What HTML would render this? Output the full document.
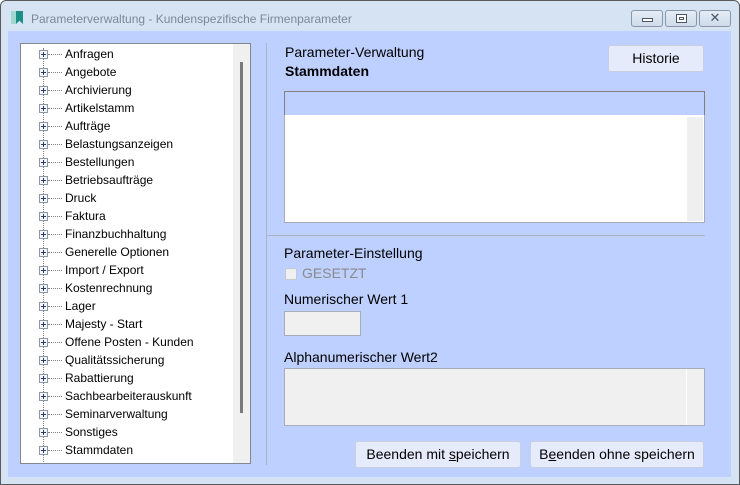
<!DOCTYPE html>
<html><head><meta charset="utf-8"><style>
*{margin:0;padding:0;box-sizing:border-box}
body{width:740px;height:485px;background:#fff;font-family:"Liberation Sans",Arial,sans-serif;position:relative;overflow:hidden}
.abs{position:absolute}
#win{left:0;top:0;width:740px;height:485px;border:1px solid #5a5a5a;border-radius:6px 6px 0 0;background:#d6e3f2}
#client{left:8px;top:31px;width:723px;height:446px;background:#bed0ff}
.title{left:31px;top:12px;font-size:12px;color:#7a8898}
.tb{top:10px;height:17px;border:1px solid #8a97a8;border-radius:3px;background:linear-gradient(#e4ecf6,#cfdbea)}
#tree{left:20px;top:43px;width:231px;height:421px;background:#fff;border:1px solid #828790}
#sb{left:233px;top:44px;width:17px;height:419px;background:#f0f0f0}
#thumb{left:240px;top:62px;width:3px;height:351px;background:#7a7a7a}
.item{position:absolute;left:65px;font-size:12px;color:#000;line-height:14px}
.plus{position:absolute;left:39px;width:9px;height:9px;border:1px solid #8c97a8;background:#f4f6fa}
.plus:before{content:"";position:absolute;left:1px;top:3px;width:5px;height:1px;background:#2a3a6a}
.plus:after{content:"";position:absolute;left:3px;top:1px;width:1px;height:5px;background:#2a3a6a}
.dot{position:absolute;left:48px;width:14px;border-top:1px dotted #808080}
.vline{left:43px;top:48px;height:416px;border-left:1px dotted #808080}
.lbl{font-size:14px;color:#000}
.btn{background:#e6ebfb;border:1px solid #c8cfdf;border-radius:3px;font-size:14px;text-align:center;color:#000}
</style></head><body>
<div id="win" class="abs"></div>
<div class="abs" style="left:11px;top:11px;width:5px;height:13px;background:#9fd8d0"></div>
<div class="abs" style="left:16px;top:11px;width:7px;height:13px;background:#1b8f86;clip-path:polygon(0 0,100% 0,100% 100%,50% 75%,0 100%)"></div>
<div class="abs title">Parameterverwaltung - Kundenspezifische Firmenparameter</div>
<div class="abs tb" style="left:631px;width:32px"><div class="abs" style="left:10px;top:7px;width:11px;height:4px;border:1px solid #4a5666;background:#fff"></div></div>
<div class="abs tb" style="left:665px;width:32px"><div class="abs" style="left:10px;top:3px;width:11px;height:9px;border:1px solid #4a5666;background:#fff"><div class="abs" style="left:2px;top:2px;width:5px;height:3px;border:1px solid #4a5666"></div></div></div>
<div class="abs tb" style="left:699px;width:32px;text-align:center;font-size:13px;line-height:14px;color:#4a5666">✕</div>
<div id="client" class="abs"></div>
<div id="tree" class="abs"></div>
<div class="abs vline"></div>
<div id="sb" class="abs"></div>
<div id="thumb" class="abs"></div>
<div id="items"></div>
<script>
var n=["Anfragen","Angebote","Archivierung","Artikelstamm","Aufträge","Belastungsanzeigen","Bestellungen","Betriebsaufträge","Druck","Faktura","Finanzbuchhaltung","Generelle Optionen","Import / Export","Kostenrechnung","Lager","Majesty - Start","Offene Posten - Kunden","Qualitätssicherung","Rabattierung","Sachbearbeiterauskunft","Seminarverwaltung","Sonstiges","Stammdaten"];
var h="";n.forEach(function(t,i){var y=54+i*18;h+='<div class="plus" style="top:'+(y-4)+'px"></div><div class="dot" style="top:'+y+'px"></div><div class="item" style="top:'+(y-7)+'px">'+t+'</div>';});
document.getElementById("items").innerHTML=h;
</script>
<div class="abs" style="left:266px;top:43px;width:1px;height:422px;background:#a8b4c8"></div>
<div class="abs lbl" style="left:285px;top:44px">Parameter-Verwaltung</div>
<div class="abs lbl" style="left:285px;top:63px;font-weight:bold">Stammdaten</div>
<div class="abs btn" style="left:608px;top:45px;width:96px;height:27px;line-height:25px">Historie</div>
<div class="abs" style="left:284px;top:91px;width:421px;height:25px;border:1px solid #808080;background:#bed0ff"></div>
<div class="abs" style="left:284px;top:115px;width:421px;height:108px;border:1px solid #a8acb8;border-top:none;background:#fff"></div>
<div class="abs" style="left:687px;top:117px;width:16px;height:104px;background:#efefef"></div>
<div class="abs" style="left:266px;top:235px;width:439px;height:1px;background:#a8b4c8"></div>
<div class="abs lbl" style="left:284px;top:245px">Parameter-Einstellung</div>
<div class="abs" style="left:285px;top:268px;width:12px;height:12px;border:1px solid #c4c8d0;border-radius:2px;background:#f0f0f0"></div>
<div class="abs lbl" style="left:302px;top:265px;color:#8a8a8a">GESETZT</div>
<div class="abs lbl" style="left:284px;top:291px">Numerischer Wert 1</div>
<div class="abs" style="left:284px;top:311px;width:77px;height:25px;border:1px solid #a8acb8;background:#f0f0f0"></div>
<div class="abs lbl" style="left:284px;top:349px">Alphanumerischer Wert2</div>
<div class="abs" style="left:284px;top:368px;width:421px;height:58px;border:1px solid #a8acb8;background:#f0f0f0"></div>
<div class="abs" style="left:686px;top:369px;width:1px;height:56px;background:#fff"></div>
<div class="abs btn" style="left:355px;top:441px;width:166px;height:27px;line-height:25px">Beenden mit <u>s</u>peichern</div>
<div class="abs btn" style="left:530px;top:441px;width:174px;height:27px;line-height:25px">B<u>e</u>enden ohne speichern</div>
</body></html>
